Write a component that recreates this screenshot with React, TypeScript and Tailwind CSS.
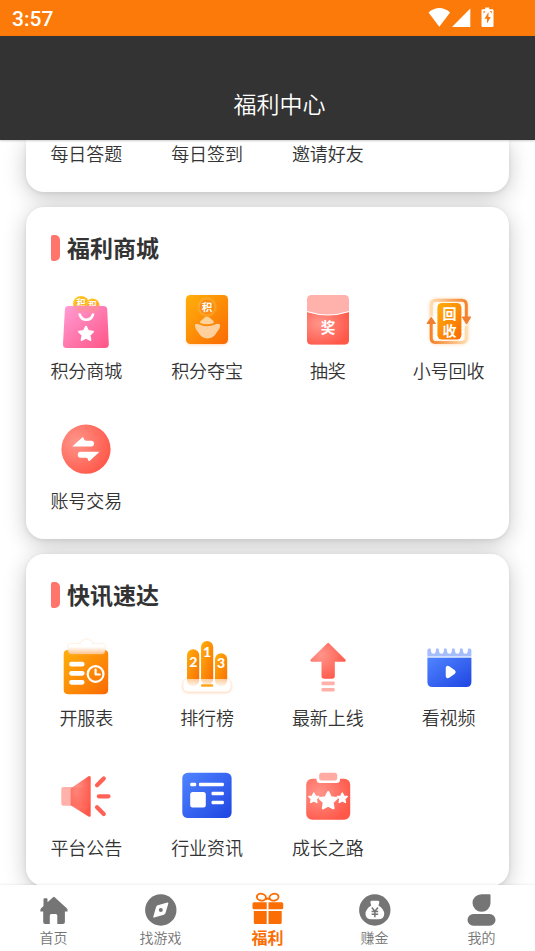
import type { ReactNode } from "react";

const STAR =
  "M0 -1 L0.29 -0.4 L0.95 -0.31 L0.47 0.15 L0.59 0.81 L0 0.5 L-0.59 0.81 L-0.47 0.15 L-0.95 -0.31 L-0.29 -0.4 Z";

function Star({ x, y, r }: { x: number; y: number; r: number }) {
  return (
    <path
      d={STAR}
      transform={`translate(${x} ${y}) scale(${r})`}
      fill="#fff"
      stroke="#fff"
      strokeWidth="0.28"
      strokeLinejoin="round"
    />
  );
}

function Gradients() {
  return (
    <svg width="0" height="0" className="absolute" aria-hidden="true">
      <defs>
        <linearGradient id="orange" x1="0" y1="0" x2="1" y2="1">
          <stop offset="0" stopColor="#ffb00a" />
          <stop offset="1" stopColor="#fa6a04" />
        </linearGradient>
        <linearGradient id="pink" x1="0" y1="0" x2="1" y2="1">
          <stop offset="0" stopColor="#ff9ed6" />
          <stop offset="1" stopColor="#ff5485" />
        </linearGradient>
        <linearGradient id="blue" x1="0" y1="0" x2="1" y2="1">
          <stop offset="0" stopColor="#5085ff" />
          <stop offset="1" stopColor="#1f45e2" />
        </linearGradient>
        <radialGradient id="red" cx="0.3" cy="0.35" r="0.75">
          <stop offset="0" stopColor="#ff958b" />
          <stop offset="1" stopColor="#ff5849" />
        </radialGradient>
        <linearGradient id="coin" x1="0" y1="0" x2="1" y2="1">
          <stop offset="0" stopColor="#ffd51f" />
          <stop offset="1" stopColor="#ff9b2e" />
        </linearGradient>
        <linearGradient id="frost" x1="0" y1="0" x2="0" y2="1">
          <stop offset="0" stopColor="#fff" />
          <stop offset="0.5" stopColor="#fff" />
          <stop offset="1" stopColor="#ffc48e" />
        </linearGradient>
        <linearGradient id="base" x1="0" y1="0" x2="0" y2="1">
          <stop offset="0" stopColor="#fff" stopOpacity="0.6" />
          <stop offset="0.7" stopColor="#fff" stopOpacity="1" />
        </linearGradient>
        <linearGradient id="loopTop" x1="0" y1="0" x2="1" y2="0">
          <stop offset="0" stopColor="#ffdcae" />
          <stop offset="1" stopColor="#f5832c" />
        </linearGradient>
        <linearGradient id="loopBottom" x1="0" y1="0" x2="1" y2="0">
          <stop offset="0" stopColor="#f5832c" />
          <stop offset="1" stopColor="#ffdcae" />
        </linearGradient>
        <filter id="glow" x="-20%" y="-40%" width="140%" height="180%">
          <feGaussianBlur stdDeviation="1.6" />
        </filter>
        <filter id="soft" x="-20%" y="-20%" width="140%" height="140%">
          <feGaussianBlur stdDeviation="1" />
        </filter>
      </defs>
    </svg>
  );
}

function Icon({ children }: { children: ReactNode }) {
  return (
    <svg
      viewBox="0 0 60 60"
      className="size-[60px] overflow-visible font-['Liberation_Sans','Noto_Sans_CJK_SC',sans-serif] font-bold"
      textAnchor="middle"
      aria-hidden="true"
    >
      {children}
    </svg>
  );
}

const mallBag = (
  <Icon>
    <circle cx="25" cy="14" r="8" fill="url(#coin)" />
    <circle cx="25" cy="14" r="6" fill="#f9b31c" />
    <circle cx="36.5" cy="15.5" r="7" fill="url(#coin)" />
    <circle cx="36.5" cy="15.5" r="5.2" fill="#ffa928" />
    <text x="25" y="16" fontSize="9" fill="#fff">积</text>
    <text x="36.5" y="17.5" fontSize="8" fill="#fff">积</text>
    <path d="M12.500 16H47.500Q50.800 16 51.200 19L52.800 54Q53 58 49 58H10.500Q6.800 58 7 54L8.900 19Q9.200 16 12.500 16Z" fill="url(#pink)" />
    <path d="M17.500 16H43.500Q43 22 36.500 22.500Q32 22.500 30.500 20Q28 22.500 25 22Q18.500 21.500 17.500 16Z" fill="#ff8f8f" opacity="0.6" filter="url(#soft)" />
    <path d="M23.700 24.500Q25.500 29.800 30.400 29.800Q35.300 29.800 37 24.500" fill="none" stroke="#fff" strokeWidth="2.600" strokeLinecap="round" />
    <Star x={30} y={44} r={7.3} />
  </Icon>
);

const treasure = (
  <Icon>
    <rect x="9" y="6" width="42" height="49" rx="5" fill="#ffb36b" opacity="0.45" filter="url(#glow)" />
    <rect x="9" y="5" width="42" height="49" rx="4.500" fill="url(#orange)" />
    <circle cx="30" cy="17" r="9" fill="#ffcf70" opacity="0.45" filter="url(#soft)" />
    <circle cx="30" cy="17" r="7.500" fill="#fa8d12" />
    <text x="30" y="21" fontSize="10.500" fill="#fff">积</text>
    <path d="M23 33C23.500 29.500 25.500 30 26.500 28.500C28.500 26 31.500 26 33.500 28.500C34.500 30 36.500 29.500 37 33Q30 35.500 23 33Z" fill="#ffd299" />
    <path d="M18 34.500Q20 33 22 34.500Q30 38 38 34.500Q40 33 43 34.500Q43.500 38 40 42Q36.500 48.500 30.500 48.500Q24.500 48.500 21 42Q17.500 38 18 34.500Z" fill="#ffcf9c" />
  </Icon>
);

const lottery = (
  <Icon>
    <rect x="9" y="5" width="42" height="49.500" rx="4.500" fill="#ffb1ab" />
    <path d="M9 22Q30 28.500 51 22V50Q51 54.500 46.500 54.500H13.500Q9 54.500 9 50Z" fill="url(#red)" />
    <path d="M9 21.500Q30 28.500 51 21.500" fill="none" stroke="#fff" strokeWidth="1.200" />
    <text x="30" y="42.500" fontSize="14.500" fill="#fff">奖</text>
  </Icon>
);

const recycle = (
  <Icon>
    <rect x="12" y="10" width="36" height="43" rx="6" fill="none" stroke="#ffc68a" strokeWidth="4" opacity="0.45" filter="url(#glow)" />
    <path d="M12.200 25.500V15Q12.200 10.300 17 10.300H42.500Q47.300 10.300 47.300 15V28" fill="none" stroke="url(#loopTop)" strokeWidth="3" />
    <path d="M43.300 27H51.800L47.500 34Z" fill="#f08030" stroke="#f08030" strokeLinejoin="round" />
    <path d="M12.200 33V48Q12.200 52.600 17 52.600H42.500Q47.300 52.600 47.300 48V36.500" fill="none" stroke="url(#loopBottom)" strokeWidth="3" />
    <path d="M8 33.500H16.500L12.200 27.300Z" fill="#f08030" stroke="#f08030" strokeLinejoin="round" />
    <rect x="18.400" y="13" width="24" height="36.500" rx="4.500" fill="url(#orange)" />
    <text x="30.500" y="29" fontSize="14" fill="#fff">回</text>
    <text x="30.500" y="45.500" fontSize="14" fill="#fff">收</text>
  </Icon>
);

const exchangeArrow =
  "M16.300 26.600L26.200 17.500Q27.400 16.800 27.600 18.300Q28 20.700 30 20.700H35.300Q38 20.700 38 23.600Q38 26.600 35.300 26.600Z";

const exchange = (
  <Icon>
    <circle cx="30" cy="29.200" r="24.600" fill="url(#red)" />
    <path d={exchangeArrow} fill="#fff" />
    <path d={exchangeArrow} transform="rotate(180 29.900 29.200)" fill="#fff" />
  </Icon>
);

const clip =
  "M15.500 7H24Q26 3 30.500 2.500Q35 3 37 7H45.500Q49 7 49 10V13.500Q49 17 45.500 17H15.500Q12.300 17 12.300 13.500V10Q12.300 7 15.500 7Z";

const schedule = (
  <Icon>
    <path d="M12 13H48Q52.200 13 52.200 17V52.500Q52.200 57.300 47.500 57.300H12.500Q7.700 57.300 7.700 52.500V17Q7.700 13 12 13Z" fill="url(#orange)" />
    <path d={clip} fill="#ffc18a" opacity="0.6" filter="url(#soft)" />
    <path d={clip} fill="url(#frost)" />
    <path d="M15.500 27.200H26.200M15.500 36.300H26.200M15.500 45.300H26.200" stroke="#fff" strokeWidth="4.800" strokeLinecap="round" />
    <circle cx="39.600" cy="37" r="7.900" fill="none" stroke="#fff" strokeWidth="2.200" />
    <path d="M39.600 32.500V37.500H43.800" fill="none" stroke="#fff" strokeWidth="2.200" strokeLinecap="round" strokeLinejoin="round" />
  </Icon>
);

const ranking = (
  <Icon>
    <rect x="6" y="42.500" width="48" height="13" rx="5" fill="#ffa45c" opacity="0.6" filter="url(#glow)" />
    <rect x="6.500" y="42" width="47" height="12.500" rx="4.500" fill="#fff" />
    <rect x="10" y="12.300" width="12.200" height="37" rx="6" fill="url(#orange)" />
    <rect x="24" y="4" width="12.200" height="44" rx="6" fill="url(#orange)" />
    <rect x="38" y="16.300" width="12.200" height="33" rx="6" fill="url(#orange)" />
    <rect x="6.500" y="42" width="47" height="12.500" rx="4.500" fill="url(#base)" />
    <rect x="24" y="47.200" width="12.200" height="2.600" rx="1" fill="#ffa61a" />
    <g fontFamily="Lato, sans-serif" fontWeight="900" fontSize="14" fill="#fff">
      <text x="16.200" y="29.500">2</text>
      <text x="30" y="19.500">1</text>
      <text x="44" y="31">3</text>
    </g>
  </Icon>
);

const launch = (
  <Icon>
    <path d="M29.300 6.200Q30.100 5.500 31 6.200L47.400 22.500Q48.500 24.500 46.500 24.700H36.800V39Q36.800 41.700 34 41.700H26.200Q23.500 41.700 23.500 39V24.700H13.700Q11.700 24.500 12.700 22.500Z" fill="url(#red)" />
    <rect x="23.500" y="44.600" width="13.200" height="3.600" rx="1" fill="#ffb0a9" />
    <rect x="23.500" y="51" width="13.200" height="3.600" rx="1" fill="#ffb0a9" />
  </Icon>
);

const video = (
  <Icon>
    <rect x="8.400" y="11.500" width="44" height="9.500" rx="2" fill="#a5bdfc" />
    {[15, 23, 31, 39, 47].map((c) => (
      <path key={c} d="M-3 -4L-2.300 0A2.300 2.300 0 0 0 2.300 0L3 -4Z" transform={`translate(${c - 0.6} 14.400)`} fill="#fff" />
    ))}
    <path d="M8.400 19.300H52.400V21H8.400Z" fill="#e3ebff" />
    <path d="M8.400 20.700H52.400V45Q52.400 50 47.400 50H13.400Q8.400 50 8.400 45Z" fill="url(#blue)" />
    <path d="M28 31Q28 29.500 29.500 30.300L34.800 34Q36 35 34.800 36L29.500 39.700Q28 40.500 28 39Z" fill="#fff" stroke="#fff" strokeWidth="2.500" strokeLinejoin="round" />
  </Icon>
);

const announcement = (
  <Icon>
    <rect x="5.300" y="20" width="12" height="18.700" rx="2" fill="#ffb1aa" />
    <path d="M14.600 21.500L32.500 9.300Q34.700 8.200 34.700 10.500V48.300Q34.700 50.500 32.500 49.500L14.600 38.300Z" fill="url(#red)" />
    <path d="M15 20.500H33V38.500H15Z" fill="#ff5d4f" opacity="0.3" />
    <path d="M41 18.300L47.800 11.500M42.800 29.300H52.500M41 40.300L47.800 47.100" stroke="#ff6255" strokeWidth="4.200" strokeLinecap="round" />
  </Icon>
);

const news = (
  <Icon>
    <rect x="5.300" y="5.700" width="49.300" height="45.300" rx="5.500" fill="url(#blue)" />
    <rect x="13.200" y="15.800" width="6" height="3.400" rx="1.200" fill="#fff" />
    <rect x="21.900" y="15.800" width="25" height="3.400" rx="1.200" fill="#fff" />
    <rect x="13.200" y="25" width="15.600" height="15.400" rx="2.500" fill="#fff" />
    <rect x="34.500" y="24.800" width="12.400" height="3.400" rx="1.200" fill="#fff" />
    <rect x="34.500" y="33.800" width="12.400" height="3.400" rx="1.200" fill="#fff" />
  </Icon>
);

const growth = (
  <Icon>
    <rect x="8.200" y="11.700" width="44" height="41" rx="6" fill="url(#red)" />
    <path d="M18.500 10V12.500Q18.500 16 22 16H38.500Q42 16 42 12.500V10Z" fill="#fff" />
    <rect x="21.200" y="5.700" width="18" height="7.700" rx="2.500" fill="#ffaaa3" />
    <Star x={30.2} y={34} r={8.8} />
    <Star x={15.8} y={31.2} r={5.2} />
    <Star x={44.3} y={31.2} r={5.2} />
  </Icon>
);

type Entry = { label: string; icon: ReactNode };

const mall: Entry[] = [
  { label: "积分商城", icon: mallBag },
  { label: "积分夺宝", icon: treasure },
  { label: "抽奖", icon: lottery },
  { label: "小号回收", icon: recycle },
  { label: "账号交易", icon: exchange },
];

const express: Entry[] = [
  { label: "开服表", icon: schedule },
  { label: "排行榜", icon: ranking },
  { label: "最新上线", icon: launch },
  { label: "看视频", icon: video },
  { label: "平台公告", icon: announcement },
  { label: "行业资讯", icon: news },
  { label: "成长之路", icon: growth },
];

const cardShadow = "shadow-[0_5px_22px_rgba(0,0,0,0.22),0_1px_4px_rgba(0,0,0,0.08)]";

function Section({ title, entries }: { title: string; entries: Entry[] }) {
  return (
    <section className={`shrink-0 rounded-[18px] bg-white pt-[25px] pb-[27px] ${cardShadow}`}>
      <div className="flex h-8 items-center gap-[7px] pl-[25px]">
        <span className="h-[26px] w-[9px] rounded-l-[2px] rounded-r-[5px] bg-[#ff756b]" />
        <h2 className="pb-[2px] text-[23px] leading-[30px] font-bold">{title}</h2>
      </div>
      <div className="mt-[26px] grid grid-cols-4 gap-y-[38px]">
        {entries.map((e) => (
          <button key={e.label} type="button" className="flex flex-col items-center gap-2">
            {e.icon}
            <span className="text-lg leading-6 whitespace-nowrap">{e.label}</span>
          </button>
        ))}
      </div>
    </section>
  );
}

function TabIcon({ children }: { children: ReactNode }) {
  return (
    <svg viewBox="0 0 32 32" className="size-8 overflow-visible" fill="currentColor" aria-hidden="true">
      {children}
    </svg>
  );
}

const tabs: Entry[] = [
  {
    label: "首页",
    icon: (
      <TabIcon>
        <path d="M15.100 3.200Q15.900 2.500 16.700 3.200L29 14.500Q29.700 15.300 29.600 17.500H26.900V28Q26.900 30 24.900 30H19.300V21.500Q19.300 20 17.800 20H13.300Q11.800 20 11.800 21.500V30H7.200Q5.200 30 5.200 28V17.500H2.300Q2.200 15.300 2.900 14.500L5.500 12V5.300Q5.500 4.300 6.500 4.300H8.500Q9.500 4.300 9.500 5.300V8.300Z" />
      </TabIcon>
    ),
  },
  {
    label: "找游戏",
    icon: (
      <TabIcon>
        <circle cx="15.800" cy="16" r="15.700" />
        <path d="M22.600 9.200L19.800 18.800Q19.400 19.700 18.600 20L9 22.900L11.800 13.200Q12.200 12.300 13 12Z" fill="#fff" stroke="#fff" strokeWidth="1.500" strokeLinejoin="round" />
        <circle cx="15.800" cy="16" r="2" />
      </TabIcon>
    ),
  },
  {
    label: "福利",
    icon: (
      <TabIcon>
        <g fill="none" stroke="currentColor" strokeWidth="1.900">
          <ellipse cx="9.400" cy="3.200" rx="4.600" ry="3.400" transform="rotate(12 9.400 3.200)" />
          <ellipse cx="22" cy="3.200" rx="4.600" ry="3.400" transform="rotate(-12 22 3.200)" />
          <path d="M13.500 5.500Q15.700 3.500 17.900 5.500" />
        </g>
        <path d="M2 8.200H14.700V15.200H2Q0.500 15.200 0.500 13.700V9.700Q0.500 8.200 2 8.200ZM16.500 8.200H29.700Q31.200 8.200 31.200 9.700V13.700Q31.200 15.200 29.700 15.200H16.500Z" />
        <path d="M1.800 17H14.700V30H3.300Q1.800 30 1.800 28.500ZM16.500 17H29.700V28.500Q29.700 30 28.200 30H16.500Z" />
      </TabIcon>
    ),
  },
  {
    label: "赚金",
    icon: (
      <TabIcon>
        <circle cx="15.800" cy="16" r="15.700" />
        <path d="M12.500 6.700H19.200Q20.500 6.900 20.300 8.300Q20 10 19.400 11.500Q25.200 15 25.200 20Q25.200 25.300 19 25.300H12.700Q6.500 25.300 6.500 20Q6.500 15 12.300 11.500Q11.700 10 11.400 8.300Q11.200 6.900 12.500 6.700Z" fill="#fff" />
        <path d="M12.800 13.500L15.900 17.300L19 13.500M12.600 17.500H19.200M12.600 20.200H19.200M15.900 17.300V23.300" fill="none" stroke="currentColor" strokeWidth="1.500" />
      </TabIcon>
    ),
  },
  {
    label: "我的",
    icon: (
      <TabIcon>
        <path d="M15.500 0.200H23.500Q24.500 0.200 24.500 1.200V8.900A9 8.800 0 1 1 15.500 0.200Z" />
        <rect x="1.500" y="20" width="28" height="11.800" rx="5.900" />
      </TabIcon>
    ),
  },
];

export default function App() {
  return (
    <div className="flex h-screen flex-col bg-white font-['Noto_Sans_CJK_SC','Noto_Sans',sans-serif] font-[350] text-[#333]">
      <Gradients />
      <div className="flex h-9 shrink-0 items-center justify-between bg-[#fb7a09] pr-[41px] pl-3 text-white">
        <span className="pt-px font-['Roboto',sans-serif] text-[21px] leading-6 font-medium">3:57</span>
        <svg viewBox="0 0 66 22" className="h-[22px] w-[66px]" fill="#fff" aria-hidden="true">
          <path d="M0.500 5.500Q5.500 1 11.300 1T22.100 5.500L11.300 19.700Z" />
          <path d="M42.300 1.500V20H24Z" />
          <path fillRule="evenodd" d="M57.200 0.500H61.200V2.300H64.500Q65.500 2.300 65.500 3.300V19Q65.500 20 64.500 20H54.500Q53.500 20 53.500 19V3.300Q53.500 2.300 54.500 2.300H57.200ZM60.500 5L56.500 11.800H59V16.500L62.800 10H60.500ZM55.500 4V6.500L57.500 4.500ZM61.800 4L63.800 6.500V4Z" />
        </svg>
      </div>
      <header className="relative z-10 flex h-[104px] shrink-0 items-end justify-center bg-[#333] pb-[21px] pl-6 shadow-[0_1px_2px_rgba(0,0,0,0.2)]">
        <h1 className="text-[23px] leading-8 text-white">福利中心</h1>
      </header>
      <main className="flex min-h-0 flex-1 flex-col gap-[15px] overflow-y-auto px-[26px] [scrollbar-width:none]">
        <section className={`grid shrink-0 grid-cols-4 rounded-b-[18px] bg-white pt-px pb-[27px] ${cardShadow}`}>
          {["每日答题", "每日签到", "邀请好友"].map((t) => (
            <button key={t} type="button" className="text-lg leading-6 whitespace-nowrap">
              {t}
            </button>
          ))}
        </section>
        <Section title="福利商城" entries={mall} />
        <Section title="快讯速达" entries={express} />
      </main>
      <nav className="relative z-10 grid h-[66px] shrink-0 grid-cols-5 bg-white shadow-[0_-1px_2px_rgba(0,0,0,0.06)]">
        {tabs.map((t) => {
          const active = t.label === "福利";
          return (
            <a
              key={t.label}
              href="#"
              aria-current={active ? "page" : undefined}
              className={`flex flex-col items-center gap-px pt-[9px] ${
                active ? "text-base font-bold text-[#fa6e05]" : "text-sm text-[#757575]"
              }`}
            >
              {t.icon}
              <span className="leading-5">{t.label}</span>
            </a>
          );
        })}
      </nav>
    </div>
  );
}
